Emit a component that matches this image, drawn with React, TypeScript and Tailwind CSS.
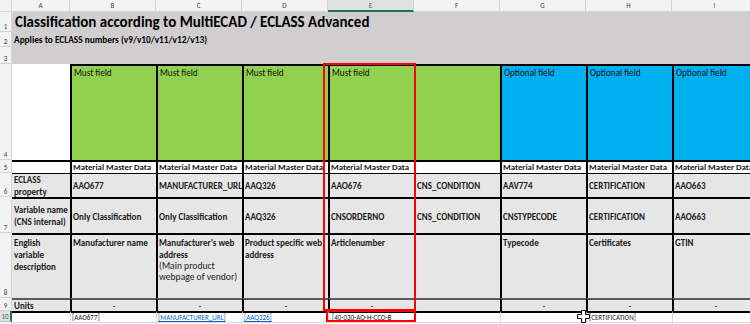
import React from "react";

const letters = ["A", "B", "C", "D", "E", "F", "G", "H", "I"];

const fields = [
  { label: "Must field", opt: false },
  { label: "Must field", opt: false },
  { label: "Must field", opt: false },
  { label: "Must field", opt: false },
  { label: "", opt: false },
  { label: "Optional field", opt: true },
  { label: "Optional field", opt: true },
  { label: "Optional field", opt: true },
];

const master = ["Material Master Data", "Material Master Data", "Material Master Data", "Material Master Data", "", "Material Master Data", "Material Master Data", "Material Master Data"];
const eclass = ["AAO677", "MANUFACTURER_URL", "AAQ326", "AAO676", "CNS_CONDITION", "AAV774", "CERTIFICATION", "AAO663"];
const varNames = ["Only Classification", "Only Classification", "AAQ326", "CNSORDERNO", "CNS_CONDITION", "CNSTYPECODE", "CERTIFICATION", "AAO663"];
const english = ["Manufacturer name", "Manufacturer's web address", "Product specific web address", "Articlenumber", "", "Typecode", "Certificates", "GTIN"];
const units = ["-", "-", "-", "-", "", "-", "-", "-"];

function RowNum({ n, active = false }: { n?: number; active?: boolean }) {
  return (
    <div
      className={
        active
          ? "flex items-end justify-center border-b border-r-2 border-[#bdbdbd] border-r-[#217346] bg-[#e1e1e1] pb-px text-[7px] leading-none text-[#217346]"
          : "flex items-end justify-center border-b border-r border-[#d4d4d4] bg-[#f3f3f3] pb-px text-[7px] leading-none text-[#444]"
      }
    >
      {n}
    </div>
  );
}

function CrossCursor() {
  return (
    <svg width="13" height="13" viewBox="0 0 13 13" className="absolute left-[577px] top-[310px]">
      <path d="M4.5 0.5h4v4h4v4h-4v4h-4v-4h-4v-4h4z" fill="#fff" stroke="#000" strokeWidth="1" />
    </svg>
  );
}

export default function App() {
  return (
    <div className="relative h-[324px] w-[750px] overflow-hidden bg-white font-[Carlito,Lato,'Liberation_Sans',sans-serif] text-[#1b1b1b]">
      <div className="grid grid-cols-[12px_58px_repeat(8,86px)] grid-rows-[12px_20px_15px_17px_96px_13px_24px_36px_65px_13px_11px_10px]">
        {/* column header */}
        <div className="border-b border-r border-[#d4d4d4] bg-[#f3f3f3]" />
        {letters.map((l) =>
          l === "E" ? (
            <div key={l} className="flex items-center justify-center border-b-2 border-r border-[#d4d4d4] border-b-[#217346] bg-[#e1e1e1] text-[7px] leading-none text-[#217346]">
              {l}
            </div>
          ) : (
            <div key={l} className="flex items-center justify-center border-b border-r border-[#d4d4d4] bg-[#f3f3f3] text-[7px] leading-none text-[#444]">
              {l}
            </div>
          )
        )}

        {/* title rows */}
        <RowNum n={1} />
        <div className="col-span-9 flex items-end whitespace-nowrap bg-[#d0cece] pb-[2px] pl-[3px] text-[15px] font-bold leading-none text-black">
          Classification according to MultiECAD / ECLASS Advanced
        </div>
        <RowNum n={2} />
        <div className="col-span-9 flex items-center whitespace-nowrap bg-[#d0cece] pl-[2px] text-[9.3px] font-bold leading-none text-black">
          Applies to ECLASS numbers (v9/v10/v11/v12/v13)
        </div>
        <RowNum n={3} />
        <div className="col-span-9 bg-[#d0cece]" />

        {/* row 4: field kind */}
        <RowNum n={4} />
        <div className="bg-white" />
        {fields.map((f, i) =>
          f.opt ? (
            <div key={i} className="border-l-2 border-t-2 border-black bg-[#00b0f0] pl-[2px] pt-[1px] text-[9.2px] leading-[12px] text-[#111]">
              {f.label}
            </div>
          ) : (
            <div key={i} className="border-l-2 border-t-2 border-black bg-[#92d050] pl-[2px] pt-[1px] text-[9.2px] leading-[12px] text-[#111]">
              {f.label}
            </div>
          )
        )}

        {/* row 5 */}
        <RowNum n={5} />
        <div className="border-t-2 border-black bg-white" />
        {master.map((m, i) => (
          <div key={i} className="flex items-center overflow-hidden whitespace-nowrap border-l-2 border-t-2 border-black bg-white pl-[1px] text-[8.8px] font-bold leading-none">
            {m}
          </div>
        ))}

        {/* row 6 */}
        <RowNum n={6} />
        <div className="flex items-center border-t border-black bg-[#e7e6e6] pl-[2px] text-[9px] font-bold leading-[12px]">
          ECLASS property
        </div>
        {eclass.map((v, i) => (
          <div key={i} className="flex items-center whitespace-nowrap border-l-2 border-t border-black bg-[#e7e6e6] pl-[1px] text-[9px] font-bold leading-none">
            {v}
          </div>
        ))}

        {/* row 7 */}
        <RowNum n={7} />
        <div className="flex items-center border-t-2 border-black bg-[#e7e6e6] pl-[2px] text-[9px] font-bold leading-[12px]">
          Variable name (CNS internal)
        </div>
        {varNames.map((v, i) => (
          <div key={i} className="flex items-center whitespace-nowrap border-l-2 border-t-2 border-black bg-[#e7e6e6] pl-[1px] text-[9px] font-bold leading-none">
            {v}
          </div>
        ))}

        {/* row 8 */}
        <RowNum n={8} />
        <div className="border-t-2 border-black bg-[#e7e6e6] pl-[2px] pt-[2px] text-[9px] font-bold leading-[12px]">
          English variable description
        </div>
        {english.map((v, i) => (
          <div key={i} className="border-l-2 border-t-2 border-black bg-[#e7e6e6] pl-[1px] pr-[4px] pt-[2px] text-[9px] font-bold leading-[12px]">
            {v}
            {i === 1 && <div className="text-[9.6px] font-normal leading-[11px]">(Main product webpage of vendor)</div>}
          </div>
        ))}

        {/* row 9 */}
        <RowNum n={9} />
        <div className="flex items-center border-t-2 border-[#5a5a5a] bg-[#e7e6e6] pl-[2px] text-[9px] font-bold leading-none">
          Units
        </div>
        {units.map((v, i) => (
          <div key={i} className="flex items-center justify-center border-l-2 border-t-2 border-black border-t-[#5a5a5a] bg-[#e7e6e6] text-[8px] font-bold leading-none">
            {v}
          </div>
        ))}

        {/* row 10 */}
        <RowNum n={10} active />
        <div className="border-t-2 border-black bg-white" />
        <div className="flex items-center whitespace-nowrap border-l border-t-2 border-black border-l-[#d9d9d9] pl-[1px] text-[7px] leading-none">[AAO677]</div>
        <div className="flex items-center whitespace-nowrap border-l border-t-2 border-black border-l-[#d9d9d9] pl-[1px] text-[7px] leading-none text-[#0563c1] underline">[MANUFACTURER_URL]</div>
        <div className="flex items-center whitespace-nowrap border-l border-t-2 border-black border-l-[#d9d9d9] pl-[1px] text-[7px] leading-none text-[#0563c1] underline">[AAQ326]</div>
        <div className="flex items-center whitespace-nowrap border-l border-t-2 border-black border-l-[#d9d9d9] pl-[3px] text-[7px] leading-none">[40-030-AO-H-CCO-B</div>
        <div className="border-l border-t-2 border-black border-l-[#d9d9d9]" />
        <div className="border-l border-t-2 border-black border-l-[#d9d9d9]" />
        <div className="flex items-center whitespace-nowrap border-l border-t-2 border-black border-l-[#d9d9d9] pl-[2px] text-[7px] leading-none">[CERTIFICATION]</div>
        <div className="border-l border-t-2 border-black border-l-[#d9d9d9]" />

        {/* row 11 (cut off) */}
        <RowNum />
        {letters.map((l) => (
          <div key={l} className="border-l border-t border-[#d9d9d9]" />
        ))}
      </div>

      {/* selection outlines */}
      <div className="absolute left-[323px] top-[63px] h-[248px] w-[93px] border-2 border-[#ff0000]" />
      <div className="absolute left-[326px] top-[310px] h-[12px] w-[90px] border-2 border-[#ff0000]" />
      <CrossCursor />
    </div>
  );
}
